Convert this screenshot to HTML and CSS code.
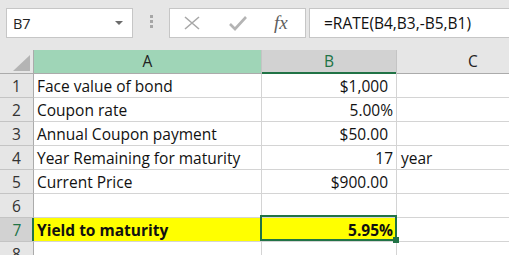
FILE: index.html
```html
<!DOCTYPE html>
<html lang="en">
<head>
    <meta charset="UTF-8">
    <title>Yield to maturity</title>
    <link rel="stylesheet" href="styles.css">
</head>
<body>
    <div class="toolbar">
        <div class="namebox">
            <span>B7</span>
            <svg class="drop" width="8" height="5" viewBox="0 0 8 5"><path d="M0 0H8L4 4Z" fill="#6b6b6b"/></svg>
        </div>
        <div class="grip"><i></i><i></i><i></i></div>
        <div class="fxbox">
            <svg width="16" height="14" viewBox="0 0 16 14"><path d="M1 1L15 13M15 1L1 13" stroke="#a8a8a8" stroke-width="1.6" fill="none"/></svg>
            <svg width="18" height="15" viewBox="0 0 18 15"><path d="M1 8L6 13L17 1" stroke="#b4b4b4" stroke-width="2.6" fill="none"/></svg>
            <span class="fx">fx</span>
        </div>
        <div class="formula">=RATE(B4,B3,-B5,B1)</div>
    </div>

    <div class="sheet">
        <div class="hd corner">
            <svg width="17" height="16" viewBox="0 0 17 16"><path d="M0 16H17V0Z" fill="#b4b4b4"/></svg>
        </div>
        <div class="hd col col-a">A</div>
        <div class="hd col col-sel">B</div>
        <div class="hd col col-c">C</div>

        <div class="hd row">1</div>
        <div class="cell">Face value of bond</div>
        <div class="cell num money">$1,000</div>
        <div class="cell"></div>

        <div class="hd row">2</div>
        <div class="cell">Coupon rate</div>
        <div class="cell num">5.00%</div>
        <div class="cell"></div>

        <div class="hd row">3</div>
        <div class="cell">Annual Coupon payment</div>
        <div class="cell num money">$50.00</div>
        <div class="cell"></div>

        <div class="hd row">4</div>
        <div class="cell">Year Remaining for maturity</div>
        <div class="cell num">17</div>
        <div class="cell unit">year</div>

        <div class="hd row">5</div>
        <div class="cell">Current Price</div>
        <div class="cell num money">$900.00</div>
        <div class="cell"></div>

        <div class="hd row">6</div>
        <div class="cell"></div>
        <div class="cell"></div>
        <div class="cell"></div>

        <div class="hd row row-sel">7</div>
        <div class="cell hl bold">Yield to maturity</div>
        <div class="cell num hl bold active">5.95%<span class="handle"></span></div>
        <div class="cell"></div>

        <div class="hd row">8</div>
        <div class="cell"></div>
        <div class="cell"></div>
        <div class="cell"></div>
    </div>
</body>
</html>
```

FILE: styles.css
```css
body {
    margin: 0;
    width: 509px;
    height: 255px;
    overflow: hidden;
    background-color: #ffffff;
    font-family: "Open Sans", "Liberation Sans", sans-serif;
    color: #000000;
}

/* formula bar */
.toolbar {
    display: flex;
    align-items: flex-start;
    height: 50px;
    padding: 8px 0 0 6px;
    box-sizing: border-box;
    background-color: #e6e6e6;
    overflow: hidden;
}

.namebox {
    display: flex;
    align-items: center;
    justify-content: space-between;
    width: 127px;
    height: 30px;
    padding: 0 9px 0 6px;
    box-sizing: border-box;
    background-color: #ffffff;
    border: 1px solid #c6c6c6;
    font-size: 14.5px;
    color: #222222;
}

.drop {
    margin-top: 1px;
}

.grip {
    display: flex;
    flex-direction: column;
    gap: 2px;
    margin: 7px 16px 0 17px;
}

.grip i {
    display: block;
    width: 3px;
    height: 3px;
    background-color: #a6a6a6;
}

.fxbox {
    display: flex;
    align-items: center;
    width: 137px;
    height: 30px;
    padding-left: 14px;
    box-sizing: border-box;
    background-color: #ffffff;
    border: 1px solid #c6c6c6;
}

.fxbox svg + svg {
    margin-left: 29px;
}

.fx {
    margin-left: 27px;
    font-family: "Liberation Serif", serif;
    font-style: italic;
    font-size: 19px;
    color: #5e5e5e;
}

.formula {
    flex: 1;
    height: 30px;
    margin-left: 3px;
    padding: 2px 0 0 14px;
    box-sizing: border-box;
    background-color: #ffffff;
    border: 1px solid #c6c6c6;
    border-right: none;
    font-size: 15.5px;
    line-height: 25px;
    color: #111111;
    white-space: nowrap;
}

/* grid */
.sheet {
    display: grid;
    grid-template-columns: 34px 228px 135px 112px;
    grid-auto-rows: 24px;
    font-size: 15.5px;
}

.hd,
.cell {
    box-sizing: border-box;
    line-height: 23px;
    padding-top: 1px;
    white-space: nowrap;
    overflow: hidden;
}

.hd {
    background-color: #e6e6e6;
    color: #333333;
    text-align: center;
    border-right: 1px solid #c4c4c4;
    border-bottom: 1px solid #c4c4c4;
}

.corner {
    display: flex;
    align-items: flex-end;
    justify-content: flex-end;
    padding: 0 3px 2px 0;
    border-bottom-color: #ababab;
    border-right-color: #ababab;
}

.col {
    padding-top: 0;
    border-bottom-color: #ababab;
    color: #222222;
}

/* column C runs past the window edge, so its letter sits off-centre */
.col-c {
    text-align: left;
    padding-left: 71px;
    border-right: none;
}

.col-a {
    background-color: #9fd5b7;
}

.col-sel {
    background-color: #d2d2d2;
    color: #217346;
    border-bottom: none;
    box-shadow: inset 0 -2px 0 #217346;
}

.row {
    border-right-color: #ababab;
}

.row-sel {
    background-color: #d2d2d2;
    color: #217346;
    border-right: none;
    box-shadow: inset -2px 0 0 #217346;
}

.cell {
    border-right: 1px solid #d4d4d4;
    border-bottom: 1px solid #d4d4d4;
    padding-left: 3px;
    color: #111111;
}

.cell:nth-child(4n) {
    border-right: none;
}

.num {
    text-align: right;
    padding-right: 3px;
}

.money {
    padding-right: 8px;
}

.unit {
    padding-left: 4px;
}

.hl {
    background-color: #ffff00;
}

.bold {
    font-weight: bold;
}

.active {
    position: relative;
    overflow: visible;
}

.active::after {
    content: "";
    position: absolute;
    top: -3px;
    left: -2px;
    right: -1px;
    bottom: 0;
    border: 2px solid #217346;
}

.handle {
    position: absolute;
    right: -3px;
    bottom: -2px;
    width: 6px;
    height: 6px;
    background-color: #217346;
    z-index: 1;
}
```
